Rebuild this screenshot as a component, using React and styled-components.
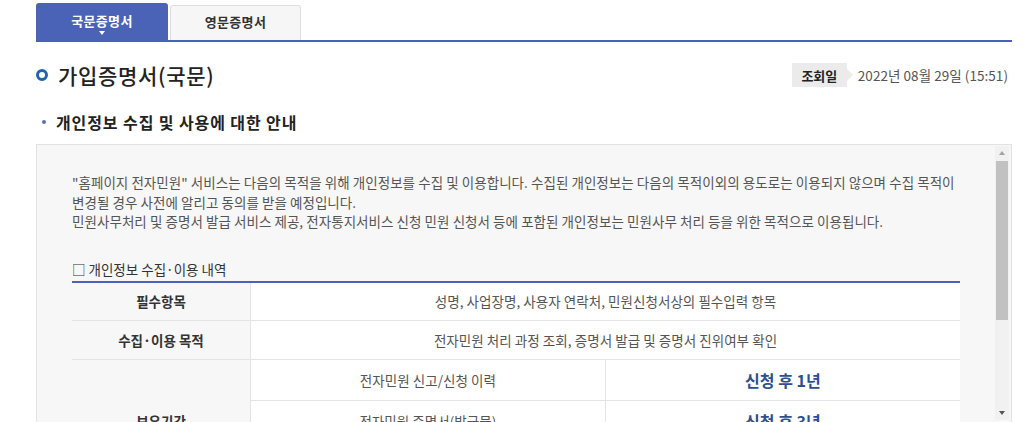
import React from "react"
import styled, { createGlobalStyle } from "styled-components"

const GlobalStyle = createGlobalStyle`
  html, body {
    margin: 0;
    padding: 0;
    overflow: hidden;
    background: #fff;
  }
  body {
    font-family: "Noto Sans CJK KR", "Noto Sans", sans-serif;
    color: #333;
  }
`

const Page = styled.div`
  width: 1024px;
  height: 422px;
  padding: 3px 12px 0 36px;
  box-sizing: border-box;
`

const Tabs = styled.div`
  display: flex;
  align-items: flex-end;
  border-bottom: 2px solid #4a63b6;
`

const Tab = styled.div`
  position: relative;
  display: flex;
  align-items: center;
  justify-content: center;
  width: ${p => (p.active ? "132px" : "131px")};
  height: ${p => (p.active ? "37px" : "35px")};
  margin-left: ${p => (p.active ? "0" : "2px")};
  box-sizing: border-box;
  border-radius: 3px 3px 0 0;
  background: ${p => (p.active ? "#4a63b6" : "#f6f6f6")};
  border: ${p => (p.active ? "none" : "1px solid #dedede")};
  border-bottom: none;
  color: ${p => (p.active ? "#fff" : "#333")};
  font-size: 13px;
  font-weight: 700;
  letter-spacing: 0.3px;
  line-height: 20px;
  padding-bottom: 2px;

  &::after {
    content: "";
    display: ${p => (p.active ? "block" : "none")};
    position: absolute;
    left: 50%;
    bottom: 5px;
    margin-left: -3px;
    border-left: 3px solid transparent;
    border-right: 3px solid transparent;
    border-top: 4px solid #fff;
  }
`

const TitleRow = styled.div`
  display: flex;
  align-items: center;
  justify-content: space-between;
  margin-top: 18px;
  height: 30px;
`

const Title = styled.h1`
  display: flex;
  align-items: center;
  gap: 10px;
  margin: 0;
  font-size: 21px;
  font-weight: 500;
  letter-spacing: 0.7px;
  line-height: 30px;
  color: #222;
`

const Ring = styled.span`
  width: 12px;
  height: 12px;
  box-sizing: border-box;
  border: 3px solid #1f63b3;
  border-radius: 50%;
`

const Inquiry = styled.div`
  display: flex;
  align-items: center;
  gap: 11px;
  margin-right: 4px;
`

const Badge = styled.span`
  position: relative;
  display: flex;
  align-items: center;
  justify-content: center;
  width: 55px;
  height: 24px;
  background: #ebebeb;
  font-size: 13px;
  font-weight: 700;
  color: #222;

  &::after {
    content: "";
    position: absolute;
    right: -6px;
    top: 50%;
    margin-top: -6px;
    border-top: 6px solid transparent;
    border-bottom: 6px solid transparent;
    border-left: 6px solid #ebebeb;
  }
`

const DateText = styled.span`
  font-size: 13.5px;
  color: #555;
  letter-spacing: 0.05px;
`

const SubHeading = styled.h2`
  display: flex;
  align-items: center;
  gap: 10px;
  margin: 21px 0 0 6px;
  font-size: 16px;
  font-weight: 700;
  letter-spacing: 0.9px;
  line-height: 22px;
  color: #222;

  &::before {
    content: "";
    width: 4px;
    height: 4px;
    border-radius: 50%;
    background: #5a6fb8;
  }
`

const NoticeBox = styled.div`
  display: flex;
  margin-top: 11px;
  height: 277px;
  border: 1px solid #e2e2e2;
  background: #f7f7f7;
  overflow: hidden;
`

const NoticeBody = styled.div`
  flex: 1;
  padding: 28px 35px 0 35px;
  overflow: hidden;
`

const Paragraph = styled.p`
  margin: 0;
  font-size: 13.5px;
  line-height: 19.5px;
  letter-spacing: 0.05px;
  color: #555;
  white-space: nowrap;
`

const ListTitle = styled.div`
  margin-top: 27px;
  font-size: 13.5px;
  line-height: 20px;
  color: #333;
`

const Table = styled.table`
  width: 100%;
  margin-top: 2px;
  border-collapse: collapse;
  border-top: 2px solid #4a63b6;
  table-layout: fixed;
`

const Th = styled.th`
  width: 178px;
  height: ${p => p.h || "37px"};
  padding: 0;
  background: #f7f7f7;
  border-bottom: 1px solid #e4e4e4;
  border-right: 1px solid #e4e4e4;
  font-size: 13.5px;
  font-weight: 700;
  color: #333;
  text-align: center;
  vertical-align: middle;
`

const Td = styled.td`
  height: ${p => p.h || "37px"};
  padding: 0;
  background: #fff;
  border-bottom: 1px solid #e4e4e4;
  border-left: ${p => (p.divided ? "1px solid #e4e4e4" : "none")};
  font-size: ${p => (p.strong ? "16px" : "13.5px")};
  font-weight: ${p => (p.strong ? 700 : 400)};
  letter-spacing: 0.05px;
  color: ${p => (p.strong ? "#2b4f8f" : "#555")};
  text-align: center;
  vertical-align: middle;
`

const ScrollTrack = styled.div`
  display: flex;
  flex-direction: column;
  width: 14px;
  margin: 1px 2px 2px 0;
  background-color: #f1f1f1;
  background-image: radial-gradient(#e4e4e4 0.6px, transparent 0.7px);
  background-size: 2px 2px;
`

const ScrollArrow = styled.div`
  display: flex;
  align-items: center;
  justify-content: center;
  height: 14px;

  &::before {
    content: "";
    border-left: 3px solid transparent;
    border-right: 3px solid transparent;
    border-${p => (p.down ? "top" : "bottom")}: 4px solid ${p => (p.down ? "#555" : "#a3a3a3")};
  }
`

const ScrollThumb = styled.div`
  height: 159px;
  margin: 1px 1px 0;
  background: #c1c1c1;
`

const ScrollSpace = styled.div`
  flex: 1;
`

const periods = [
  ["전자민원 신고/신청 이력", "신청 후 1년"],
  ["전자민원 증명서(발급물)", "신청 후 3년"],
  ["전자통지서비스 신청 이력", "신청 후 5년"],
]

export default function App() {
  return (
    <Page>
      <GlobalStyle />
      <Tabs>
        <Tab active>국문증명서</Tab>
        <Tab>영문증명서</Tab>
      </Tabs>

      <TitleRow>
        <Title>
          <Ring />
          가입증명서(국문)
        </Title>
        <Inquiry>
          <Badge>조회일</Badge>
          <DateText>2022년 08월 29일 (15:51)</DateText>
        </Inquiry>
      </TitleRow>

      <SubHeading>개인정보 수집 및 사용에 대한 안내</SubHeading>

      <NoticeBox>
        <NoticeBody>
          <Paragraph>
            "홈페이지 전자민원" 서비스는 다음의 목적을 위해 개인정보를 수집 및 이용합니다. 수집된 개인정보는 다음의 목적이외의 용도로는 이용되지 않으며 수집 목적이
            <br />
            변경될 경우 사전에 알리고 동의를 받을 예정입니다.
            <br />
            민원사무처리 및 증명서 발급 서비스 제공, 전자통지서비스 신청 민원 신청서 등에 포함된 개인정보는 민원사무 처리 등을 위한 목적으로 이용됩니다.
          </Paragraph>

          <ListTitle>□ 개인정보 수집·이용 내역</ListTitle>
          <Table>
            <tbody>
              <tr>
                <Th>필수항목</Th>
                <Td colSpan={2}>성명, 사업장명, 사용자 연락처, 민원신청서상의 필수입력 항목</Td>
              </tr>
              <tr>
                <Th h="38px">수집·이용 목적</Th>
                <Td h="38px" colSpan={2}>전자민원 처리 과정 조회, 증명서 발급 및 증명서 진위여부 확인</Td>
              </tr>
              {periods.map(([item, term], i) => (
                <tr key={item}>
                  {i === 0 && <Th rowSpan={periods.length}>보유기간</Th>}
                  <Td h="40px">{item}</Td>
                  <Td h="40px" divided strong>{term}</Td>
                </tr>
              ))}
            </tbody>
          </Table>
        </NoticeBody>
        <ScrollTrack>
          <ScrollArrow />
          <ScrollThumb />
          <ScrollSpace />
          <ScrollArrow down />
        </ScrollTrack>
      </NoticeBox>
    </Page>
  )
}
